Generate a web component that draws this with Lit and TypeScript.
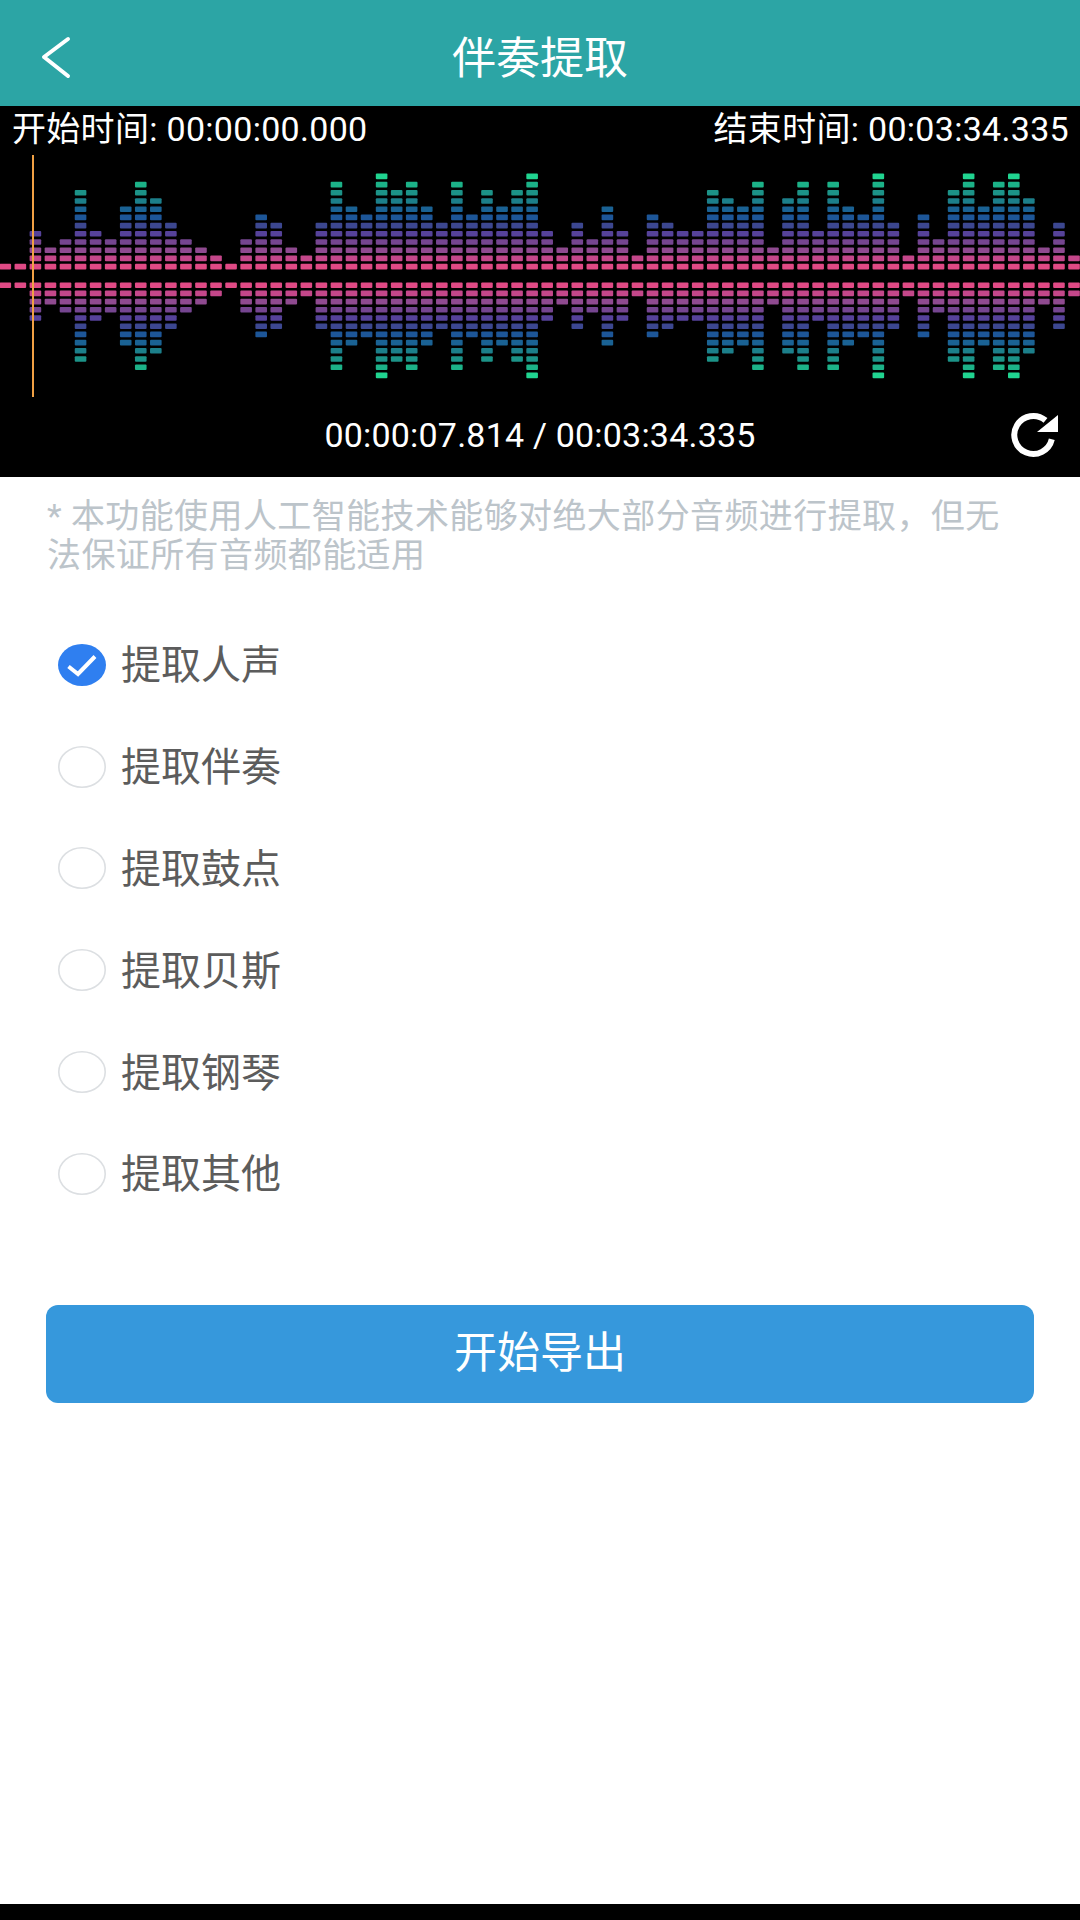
import { LitElement, html, css, svg } from "lit";
import { customElement } from "lit/decorators.js";

const LEVELS = [
  1, 1, 5, 3, 4, 10, 5, 4, 8, 11, 9, 6, 4, 3, 2, 1, 4, 7, 6, 3,
  2, 6, 11, 8, 7, 12, 10, 11, 8, 6, 11, 7, 10, 8, 10, 12, 5, 3, 6, 4,
  8, 5, 2, 7, 6, 5, 5, 10, 9, 8, 11, 3, 9, 11, 5, 11, 8, 7, 12, 6,
  2, 7, 4, 10, 12, 8, 11, 12, 9, 3, 6, 2,
];

// colour of each row, counted outwards from the centre line
const ROW_COLORS = [
  "#e04a85", "#c4478a", "#8f4a90", "#754590", "#56429a", "#3c4790",
  "#1d5698", "#1a6294", "#1c7f8a", "#1c9388", "#1cb288", "#20d490",
];

const OPTIONS = ["提取人声", "提取伴奏", "提取鼓点", "提取贝斯", "提取钢琴", "提取其他"];

@customElement("app-root")
export class AppRoot extends LitElement {
  static styles = css`
    :host {
      display: flex;
      flex-direction: column;
      width: 1080px;
      height: 1920px;
      background: #fff;
      font-family: Roboto, "Noto Sans CJK SC", sans-serif;
      overflow: hidden;
    }

    .header {
      height: 106px;
      flex: none;
      display: flex;
      align-items: center;
      justify-content: center;
      position: relative;
      background: #2ca5a5;
      color: #fff;
      font-size: 44px;
    }

    .title {
      margin-top: 4px;
    }

    .back {
      position: absolute;
      left: 40px;
      top: 35px;
    }

    .panel {
      height: 371px;
      flex: none;
      display: flex;
      flex-direction: column;
      background: #000;
      color: #fff;
    }

    .times {
      height: 49px;
      padding: 0 11px 8px 12px;
      box-sizing: border-box;
      display: flex;
      justify-content: space-between;
      align-items: center;
      font-size: 34px;
      letter-spacing: 0.3px;
    }

    .wave {
      display: block;
      height: 242px;
      width: 1080px;
    }

    .cells {
      filter: blur(0.6px);
    }

    .progress {
      flex: 1;
      position: relative;
      display: flex;
      align-items: center;
      justify-content: center;
      font-size: 34px;
      letter-spacing: 0.2px;
      padding-bottom: 4px;
    }

    .refresh {
      position: absolute;
      left: 1008px;
      top: 13px;
    }

    .hint {
      margin: 20px 60px 0 47px;
      font-size: 34px;
      line-height: 39px;
      letter-spacing: 0.4px;
      color: #bcc4ca;
    }

    .options {
      margin-top: 39px;
      display: flex;
      flex-direction: column;
    }

    .option {
      height: 101.8px;
      padding-left: 58px;
      display: flex;
      align-items: center;
      gap: 15px;
      font-size: 40px;
      color: #5c5c5c;
    }

    .option span {
      margin-bottom: 5px;
    }

    .mark {
      display: block;
      flex: none;
      width: 48px;
      height: 42px;
    }

    .export {
      margin: 80px 46px 0 46px;
      height: 98px;
      padding-bottom: 9px;
      box-sizing: border-box;
      display: flex;
      align-items: center;
      justify-content: center;
      border-radius: 12px;
      background: #3698dc;
      color: #fff;
      font-size: 43px;
    }

    .spacer {
      flex: 1;
    }

    .navbar {
      height: 16px;
      flex: none;
      background: #000;
    }
  `;

  private renderWave() {
    const pitch = 1080 / 71.75;
    return html`
      <svg class="wave" viewBox="0 155 1080 242">
        <g class="cells">
          ${LEVELS.map((level, i) =>
            Array.from({ length: level }, (_, r) => {
              const x = i * pitch - 0.5;
              return svg`
                <rect x=${x} y=${263.8 - r * 8.2} width="11.6" height="5.6" rx="1" fill=${ROW_COLORS[r]}></rect>
                <rect x=${x} y=${282.4 + r * 8.2} width="11.6" height="5.6" rx="1" fill=${ROW_COLORS[r]}></rect>
              `;
            })
          )}
        </g>
        <rect x="32" y="155" width="2" height="242" fill="#f0a044"></rect>
      </svg>
    `;
  }

  private renderMark(checked: boolean) {
    if (checked) {
      return html`
        <svg class="mark" viewBox="0 0 48 42">
          <ellipse cx="24" cy="21" rx="24" ry="21" fill="#2f7ff0"></ellipse>
          <path d="M10.5 22.5 L20 30 L37 12.5" fill="none" stroke="#fff" stroke-width="4"></path>
        </svg>
      `;
    }
    return html`
      <svg class="mark" viewBox="0 0 48 42">
        <ellipse cx="24" cy="21" rx="23.2" ry="20.2" fill="#fff" stroke="#dcdfe2" stroke-width="1.6"></ellipse>
      </svg>
    `;
  }

  render() {
    return html`
      <div class="header">
        <svg class="back" width="36" height="46" viewBox="0 0 36 46">
          <path d="M28 4 L4 22 L28 41" fill="none" stroke="#fff" stroke-width="4" stroke-linecap="round" stroke-linejoin="round"></path>
        </svg>
        <span class="title">伴奏提取</span>
      </div>
      <div class="panel">
        <div class="times">
          <span>开始时间: 00:00:00.000</span>
          <span>结束时间: 00:03:34.335</span>
        </div>
        ${this.renderWave()}
        <div class="progress">
          00:00:07.814 / 00:03:34.335
          <svg class="refresh" width="52" height="50" viewBox="0 0 52 50">
            <path d="M37.5 10.4 A19 19 0 1 0 43.8 29.3" fill="none" stroke="#fff" stroke-width="6"></path>
            <path d="M50 5 L50 22 L29 22 Z" fill="#fff"></path>
          </svg>
        </div>
      </div>
      <div class="hint">* 本功能使用人工智能技术能够对绝大部分音频进行提取，但无法保证所有音频都能适用</div>
      <div class="options">
        ${OPTIONS.map(
          (label, i) => html`
            <div class="option">
              ${this.renderMark(i === 0)}
              <span>${label}</span>
            </div>
          `
        )}
      </div>
      <div class="export">开始导出</div>
      <div class="spacer"></div>
      <div class="navbar"></div>
    `;
  }
}
